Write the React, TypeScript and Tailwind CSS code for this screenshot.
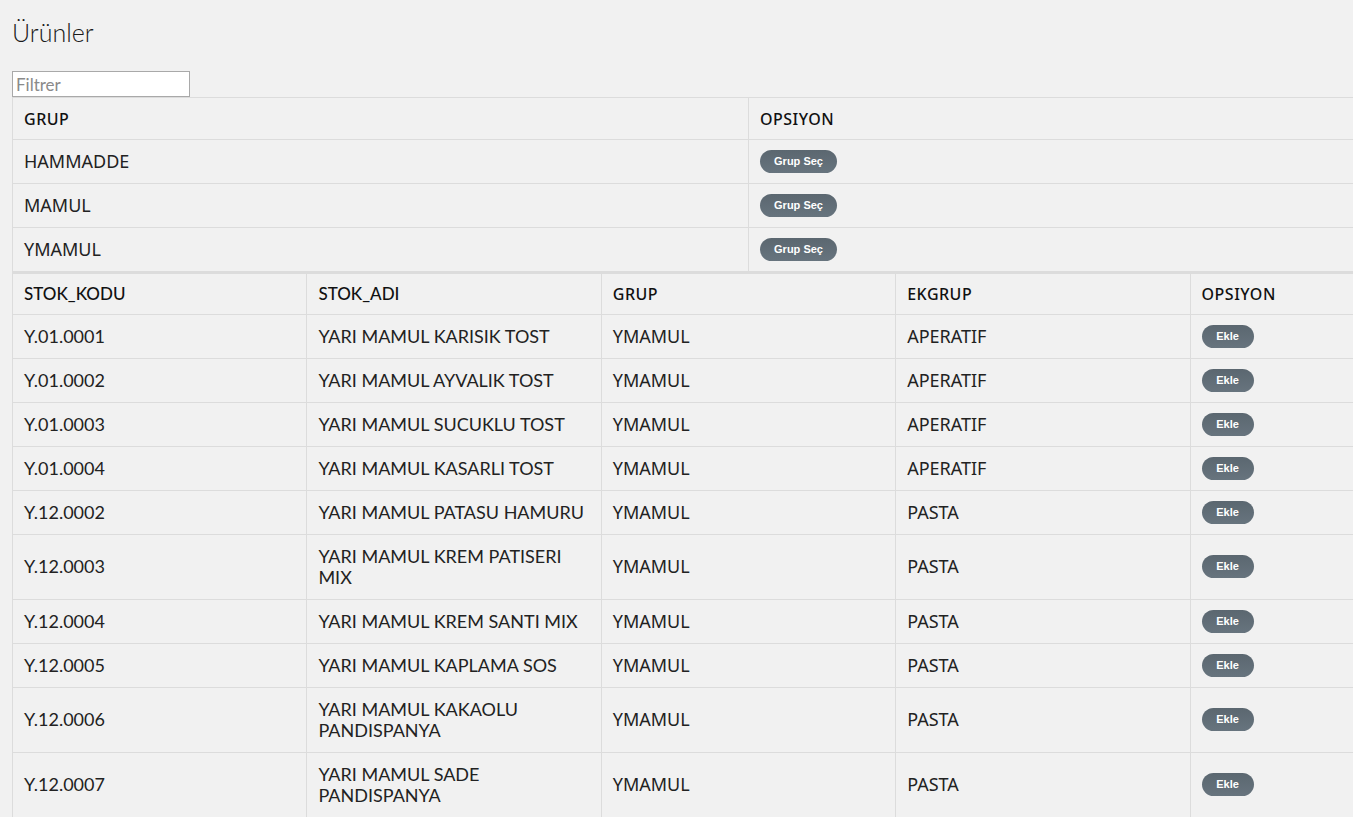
import React from "react";

const groups = ["HAMMADDE", "MAMUL", "YMAMUL"];

const products: [string, string, string, string][] = [
  ["Y.01.0001", "YARI MAMUL KARISIK TOST", "YMAMUL", "APERATIF"],
  ["Y.01.0002", "YARI MAMUL AYVALIK TOST", "YMAMUL", "APERATIF"],
  ["Y.01.0003", "YARI MAMUL SUCUKLU TOST", "YMAMUL", "APERATIF"],
  ["Y.01.0004", "YARI MAMUL KASARLI TOST", "YMAMUL", "APERATIF"],
  ["Y.12.0002", "YARI MAMUL PATASU HAMURU", "YMAMUL", "PASTA"],
  ["Y.12.0003", "YARI MAMUL KREM PATISERI MIX", "YMAMUL", "PASTA"],
  ["Y.12.0004", "YARI MAMUL KREM SANTI MIX", "YMAMUL", "PASTA"],
  ["Y.12.0005", "YARI MAMUL KAPLAMA SOS", "YMAMUL", "PASTA"],
  ["Y.12.0006", "YARI MAMUL KAKAOLU PANDISPANYA", "YMAMUL", "PASTA"],
  ["Y.12.0007", "YARI MAMUL SADE PANDISPANYA", "YMAMUL", "PASTA"],
];

const raleway = "font-['Lato','Liberation_Sans',sans-serif]";
const mont = "font-['Noto_Sans','DejaVu_Sans',sans-serif]";

function Pill({ label, w }: { label: string; w: string }) {
  return (
    <button
      className={`${w} block h-[23px] rounded-full bg-gradient-to-b from-[#5b6770] to-[#67747e] text-white text-[11px] font-bold font-['Liberation_Sans',Arial,sans-serif] leading-[23px] text-center`}
    >
      {label}
    </button>
  );
}

const cellBorder = "border-l border-r border-[#dcdcdc]";

export default function App() {
  return (
    <div className="w-[1353px] min-h-[817px] overflow-hidden bg-[#f1f1f1] text-[#222]">
      <div className="pl-[12px]">
        <h1
          className={`${raleway} font-light text-[25px] leading-[30px] pt-[17px] text-[#1a1a1a]`}
        >
          Ürünler
        </h1>
        <input
          placeholder="Filtrer"
          className={`${raleway} mt-[24px] block w-[178px] h-[26px] border border-[#a9a9a9] bg-white px-[3px] text-[17px] text-[#333] placeholder:text-[#8a8a8a] outline-none`}
        />
        <table className="w-[1473px] table-fixed border-collapse">
          <thead>
            <tr className="h-[42px] border-t border-b border-[#dcdcdc]">
              <th className={`${mont} text-left font-medium text-[16px] tracking-[0.5px] pl-[11px] pr-[12px] ${cellBorder} text-[#111]`}>
                GRUP
              </th>
              <th className={`${mont} text-left font-medium text-[16px] tracking-[0.5px] pl-[11px] pr-[12px] ${cellBorder} text-[#111]`}>
                OPSIYON
              </th>
            </tr>
          </thead>
          <tbody>
            {groups.map((g) => (
              <tr key={g} className="border-b border-[#dcdcdc]">
                <td className={`${mont} font-normal text-[18px] leading-[21px] py-[11px] pl-[11px] pr-[12px] ${cellBorder} text-[#222]`}>
                  {g}
                </td>
                <td className={`py-0 pl-[11px] pr-[12px] ${cellBorder} align-middle`}>
                  <Pill label="Grup Seç" w="w-[77px]" />
                </td>
              </tr>
            ))}
          </tbody>
        </table>
        <table className="w-[1473px] table-fixed border-collapse">
          <thead>
            <tr className="h-[41px] border-t-2 border-b border-[#dcdcdc]">
              {["STOK_KODU", "STOK_ADI", "GRUP", "EKGRUP", "OPSIYON"].map((h, i) => (
                <th
                  key={h}
                  className={`${i < 2 ? raleway : mont} text-left ${i < 2 ? "font-medium text-[17px]" : "font-medium text-[16px] tracking-[0.5px]"} pl-[11px] pr-[12px] ${cellBorder} text-[#111]`}
                >
                  {h}
                </th>
              ))}
            </tr>
          </thead>
          <tbody>
            {products.map(([code, name, grp, ek]) => (
              <tr key={code} className="border-b border-[#dcdcdc]">
                <td className={`${raleway} font-normal text-[18px] leading-[21px] py-[11px] pl-[11px] pr-[12px] ${cellBorder} text-[#222]`}>
                  {code}
                </td>
                <td className={`${raleway} font-normal text-[18px] leading-[21px] py-[11px] pl-[11px] pr-[12px] ${cellBorder} text-[#222]`}>
                  {name}
                </td>
                <td className={`${mont} font-normal text-[18px] leading-[21px] py-[11px] pl-[11px] pr-[12px] ${cellBorder} text-[#222]`}>
                  {grp}
                </td>
                <td className={`${mont} font-normal text-[18px] leading-[21px] py-[11px] pl-[11px] pr-[12px] ${cellBorder} text-[#222]`}>
                  {ek}
                </td>
                <td className={`py-0 pl-[11px] pr-[12px] ${cellBorder} align-middle`}>
                  <Pill label="Ekle" w="w-[52px]" />
                </td>
              </tr>
            ))}
          </tbody>
        </table>
      </div>
    </div>
  );
}
